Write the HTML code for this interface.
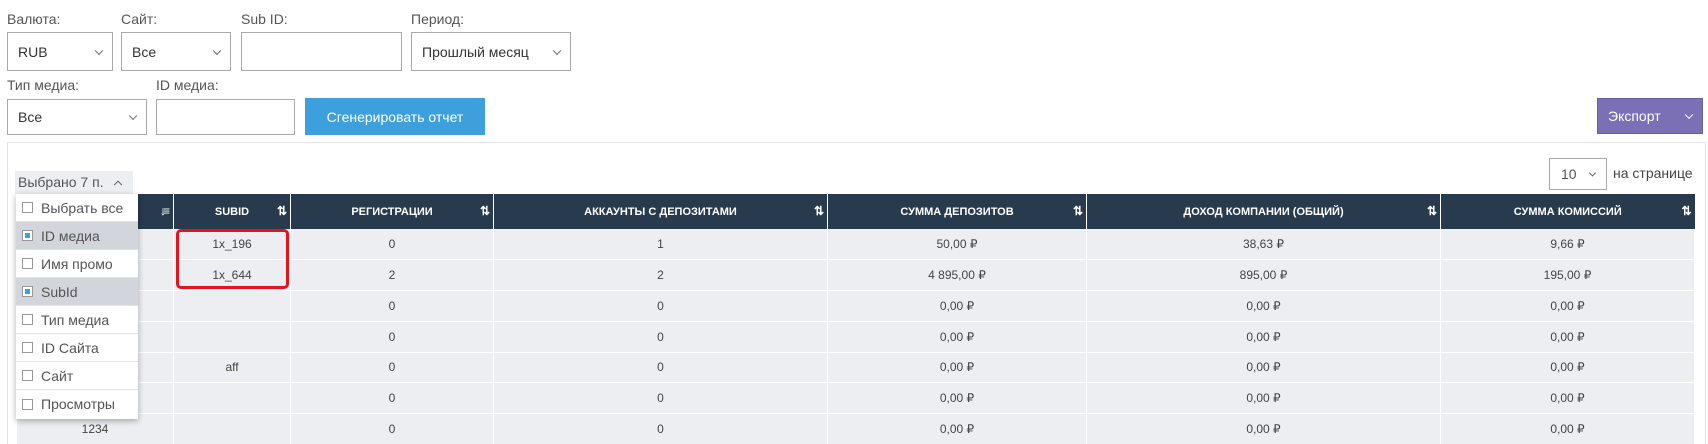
<!DOCTYPE html>
<html><head><meta charset="utf-8"><style>
*{box-sizing:border-box;margin:0;padding:0}
html,body{width:1708px;height:444px;overflow:hidden}
body{background:#fff;font-family:"Liberation Sans",sans-serif;color:#444;position:relative;font-size:14px}
.a{position:absolute}
.lbl{position:absolute;font-size:14px;color:#555}
.box{position:absolute;border:1px solid #aaa;background:#fff;font-size:14px;color:#333;padding-left:10px;display:flex;align-items:center}
.chev{position:absolute;right:10px;top:50%;width:6px;height:6px;border-right:1px solid #666;border-bottom:1px solid #666;transform:translateY(-70%) rotate(45deg)}
.wrap{position:absolute;left:16px;top:194px;width:1680px;height:250px;overflow:hidden}
table{border-collapse:collapse;table-layout:fixed}
th{background:#283a4e;color:#fff;font-size:11px;font-weight:bold;height:35px;border-left:1px solid #fff;position:relative;text-align:center}
th:first-child{border-left:none}
th span.s{position:absolute;right:6px;top:10px;font-size:12px;letter-spacing:-3px}
td{background:#eceef2;height:30.75px;border:1px solid #fff;border-top:none;text-align:center;font-size:12px;color:#444}
.dd{position:absolute;left:16px;top:194px;width:122px;height:225px;background:#fff;box-shadow:0 2px 6px rgba(0,0,0,.3)}
.it{height:28px;border-bottom:1px solid #e3e3e3;display:flex;align-items:center;padding-left:6px;font-size:14px;color:#555}
.it.sel{background:#d2d5dc}
.cb{width:11px;height:11px;border:1px solid #999;background:#fff;margin-right:8px;position:relative}
.sel .cb::after{content:"";position:absolute;left:2px;top:2px;width:5px;height:5px;background:#3d9fdc}
</style></head><body>
<div class="lbl" style="left:7px;top:11px">Валюта:</div>
<div class="lbl" style="left:121px;top:11px">Сайт:</div>
<div class="lbl" style="left:241px;top:11px">Sub ID:</div>
<div class="lbl" style="left:411px;top:11px">Период:</div>
<div class="box" style="left:7px;top:32px;width:106px;height:39px">RUB<i class="chev"></i></div>
<div class="box" style="left:121px;top:32px;width:110px;height:39px">Все<i class="chev"></i></div>
<div class="box" style="left:241px;top:32px;width:161px;height:39px"></div>
<div class="box" style="left:411px;top:32px;width:160px;height:39px">Прошлый месяц<i class="chev"></i></div>
<div class="lbl" style="left:7px;top:77px">Тип медиа:</div>
<div class="lbl" style="left:156px;top:77px">ID медиа:</div>
<div class="box" style="left:7px;top:99px;width:140px;height:36px">Все<i class="chev"></i></div>
<div class="box" style="left:156px;top:99px;width:139px;height:36px"></div>
<div class="a" style="left:305px;top:98px;width:180px;height:37px;background:#3d9fdc;color:#fff;display:flex;align-items:center;justify-content:center;font-size:14px">Сгенерировать отчет</div>
<div class="a" style="left:1597px;top:98px;width:106px;height:36px;background:#7b6fb5;border:1px solid #6a5fa5;color:#fff;font-size:14px;padding-left:10px;display:flex;align-items:center">Экспорт<i class="chev" style="border-color:#fff"></i></div>
<div class="a" style="left:7px;top:142px;width:1699px;height:302px;border:1px solid #e3e3e3;border-bottom:none"></div>
<div class="a" style="left:15px;top:171px;width:118px;height:23px;background:#eceef2;font-size:14px;color:#555;padding-left:3px;line-height:23px">Выбрано 7 п.<i class="chev" style="transform:translateY(-20%) rotate(225deg);right:12px"></i></div>
<div class="box" style="left:1549px;top:158px;width:58px;height:32px;padding-left:11px;color:#555">10<i class="chev" style="right:11px;width:5px;height:5px"></i></div>
<div class="lbl" style="left:1613px;top:165px;color:#444">на странице</div>
<div class="wrap"><table>
<colgroup><col style="width:157px"><col style="width:117px"><col style="width:203px"><col style="width:334px"><col style="width:259px"><col style="width:354px"><col style="width:254px"></colgroup>
<tr><th><span class="s">↓≡</span></th><th>SUBID<span class="s">⇅</span></th><th>РЕГИСТРАЦИИ<span class="s">⇅</span></th><th>АККАУНТЫ С ДЕПОЗИТАМИ<span class="s">⇅</span></th><th>СУММА ДЕПОЗИТОВ<span class="s">⇅</span></th><th>ДОХОД КОМПАНИИ (ОБЩИЙ)<span class="s">⇅</span></th><th>СУММА КОМИССИЙ<span class="s">⇅</span></th></tr>
<tr><td></td><td>1x_196</td><td>0</td><td>1</td><td>50,00 ₽</td><td>38,63 ₽</td><td>9,66 ₽</td></tr>
<tr><td></td><td>1x_644</td><td>2</td><td>2</td><td>4 895,00 ₽</td><td>895,00 ₽</td><td>195,00 ₽</td></tr>
<tr><td></td><td></td><td>0</td><td>0</td><td>0,00 ₽</td><td>0,00 ₽</td><td>0,00 ₽</td></tr>
<tr><td></td><td></td><td>0</td><td>0</td><td>0,00 ₽</td><td>0,00 ₽</td><td>0,00 ₽</td></tr>
<tr><td></td><td>aff</td><td>0</td><td>0</td><td>0,00 ₽</td><td>0,00 ₽</td><td>0,00 ₽</td></tr>
<tr><td></td><td></td><td>0</td><td>0</td><td>0,00 ₽</td><td>0,00 ₽</td><td>0,00 ₽</td></tr>
<tr><td>1234</td><td></td><td>0</td><td>0</td><td>0,00 ₽</td><td>0,00 ₽</td><td>0,00 ₽</td></tr>
</table></div>
<div class="a" style="left:176px;top:229px;width:113px;height:60px;border:3px solid #e8121b;border-radius:5px"></div>
<div class="dd">
<div class="it"><span class="cb"></span>Выбрать все</div>
<div class="it sel"><span class="cb"></span>ID медиа</div>
<div class="it"><span class="cb"></span>Имя промо</div>
<div class="it sel"><span class="cb"></span>SubId</div>
<div class="it"><span class="cb"></span>Тип медиа</div>
<div class="it"><span class="cb"></span>ID Сайта</div>
<div class="it"><span class="cb"></span>Сайт</div>
<div class="it" style="border:none"><span class="cb"></span>Просмотры</div>
</div>
</body></html>
